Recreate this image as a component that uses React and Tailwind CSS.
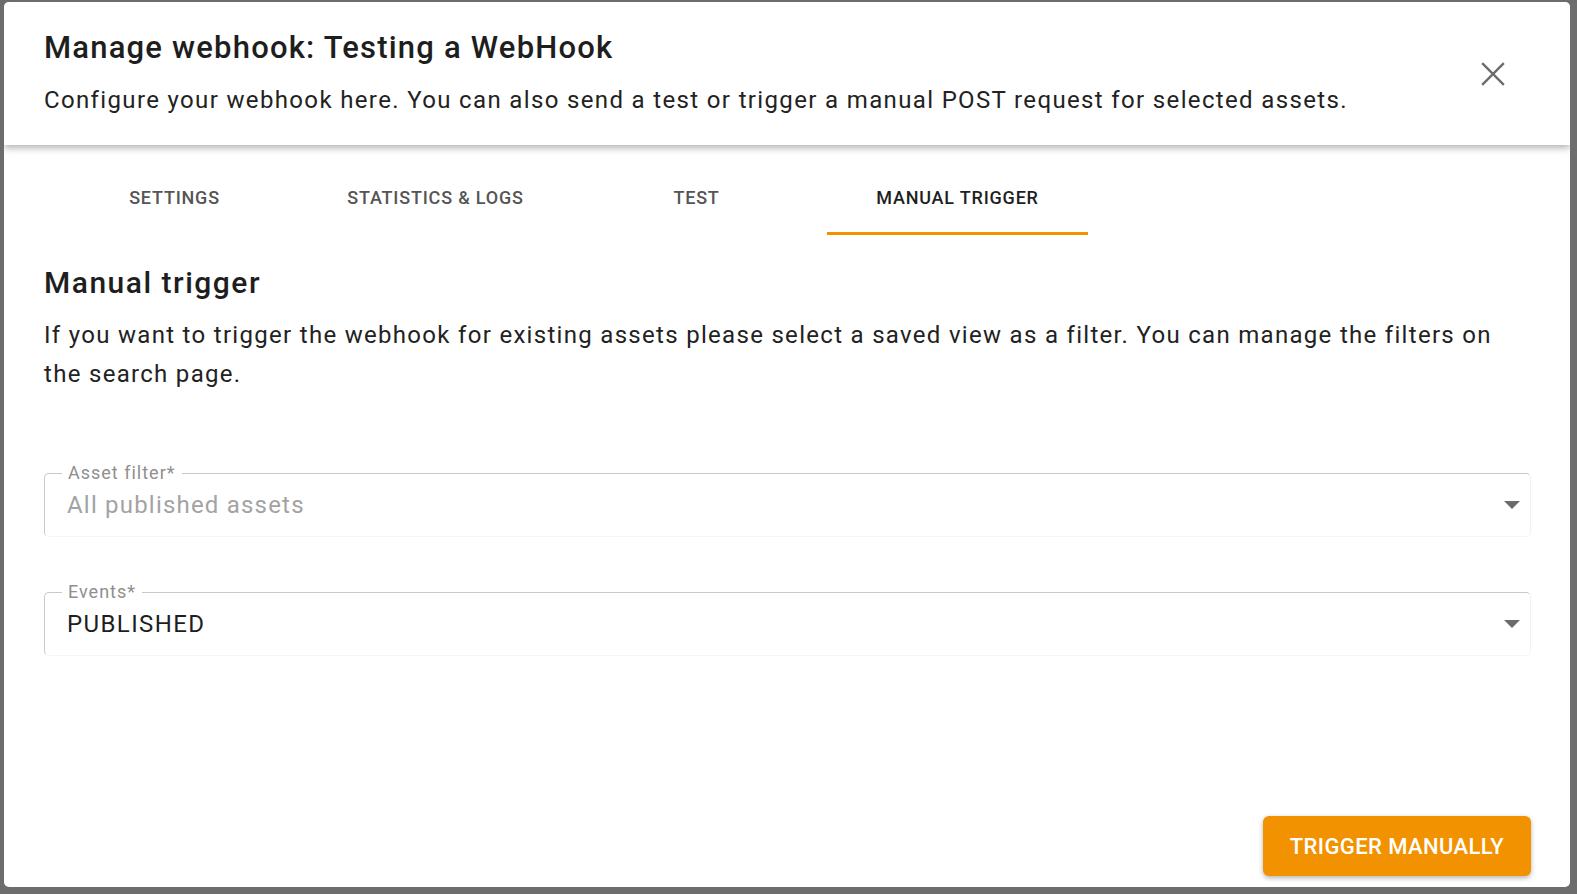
import React from "react";

function Caret() {
  return (
    <svg width="16" height="8" viewBox="0 0 16 8" className="text-[#6b6b6b] shrink-0">
      <path d="M0 0h16L8 8z" fill="currentColor" />
    </svg>
  );
}

function Field({ label, value, valueClass }) {
  return (
    <div className="relative h-[64px] rounded-[5px] border border-t-[#c9c9c9] border-l-[#c9c9c9] border-r-[#f1f1f1] border-b-[#f6f6f6] flex items-center pl-[22px] pr-[10px]">
      <span className="absolute -top-[12px] left-[17px] bg-white px-[6px] text-[18px] leading-[22px] tracking-[1px] text-[#8f8f8f]">
        {label}
      </span>
      <span className={`flex-1 text-[24px] leading-[30px] ${valueClass}`}>{value}</span>
      <Caret />
    </div>
  );
}

export default function App() {
  const tabs = ["SETTINGS", "STATISTICS & LOGS", "TEST", "MANUAL TRIGGER"];
  return (
    <div
      className="w-full h-[894px] bg-[#6d6d6d] pt-[2px] pl-[4px] pr-[7px] pb-[7px]"
      style={{ fontFamily: "Roboto, 'Noto Sans', sans-serif" }}
    >
      <div className="w-full h-full bg-white rounded-[5px] flex flex-col overflow-hidden">
        <div className="relative z-10 h-[143px] shrink-0 bg-white shadow-[0_3px_7px_rgba(0,0,0,0.3)] flex items-start pl-[40px] pr-[57px]">
          <div className="flex-1 pt-[26px]">
            <h1 className="text-[31px] leading-[40px] font-medium tracking-[1.2px] text-[#1e1e1e]">
              Manage webhook: Testing a WebHook
            </h1>
            <p className="mt-[17px] text-[24px] leading-[30px] tracking-[1.35px] text-[#222]">
              Configure your webhook here. You can also send a test or trigger a manual POST request for selected assets.
            </p>
          </div>
          <button className="mt-[52px] text-[#6b6b6b]">
            <svg width="40" height="40" viewBox="0 0 24 24">
              <path d="M5.5 5.5l13 13M18.5 5.5l-13 13" stroke="currentColor" strokeWidth="1.4" fill="none" />
            </svg>
          </button>
        </div>

        <div className="flex-1 flex flex-col pl-[40px] pr-[39px]">
          <div className="flex h-[90px] shrink-0">
            {tabs.map((t, i) => (
              <div
                key={t}
                className={`w-[261px] pt-[14px] flex items-center justify-center text-[18px] font-medium tracking-[0.8px] relative ${
                  i === 3 ? "text-[#1f1f1f]" : "text-[#555]"
                }`}
              >
                {t}
                {i === 3 && (
                  <span className="absolute left-0 right-0 bottom-0 h-[3px] bg-[#f39200]" />
                )}
              </div>
            ))}
          </div>

          <h2 className="mt-[30px] text-[30px] leading-[36px] font-medium tracking-[1.5px] text-[#1e1e1e]">
            Manual trigger
          </h2>
          <p className="mt-[15px] text-[24px] leading-[39px] tracking-[1.3px] text-[#222]">
            If you want to trigger the webhook for existing assets please select a saved view as a filter. You can manage the filters on the search page.
          </p>

          <div className="mt-[79px] flex flex-col gap-[55px]">
            <Field label="Asset filter*" value="All published assets" valueClass="text-[#a3a3a3] tracking-[1.2px]" />
            <Field label="Events*" value="PUBLISHED" valueClass="text-[#1e1e1e] tracking-[1.4px]" />
          </div>

          <div className="flex-1" />
          <div className="flex justify-end pb-[11px]">
            <button className="h-[60px] w-[268px] rounded-[6px] bg-[#f39200] text-white text-[22px] font-medium tracking-[0.4px] shadow-[0_2px_5px_rgba(0,0,0,0.3)]">
              TRIGGER MANUALLY
            </button>
          </div>
        </div>
      </div>
    </div>
  );
}
